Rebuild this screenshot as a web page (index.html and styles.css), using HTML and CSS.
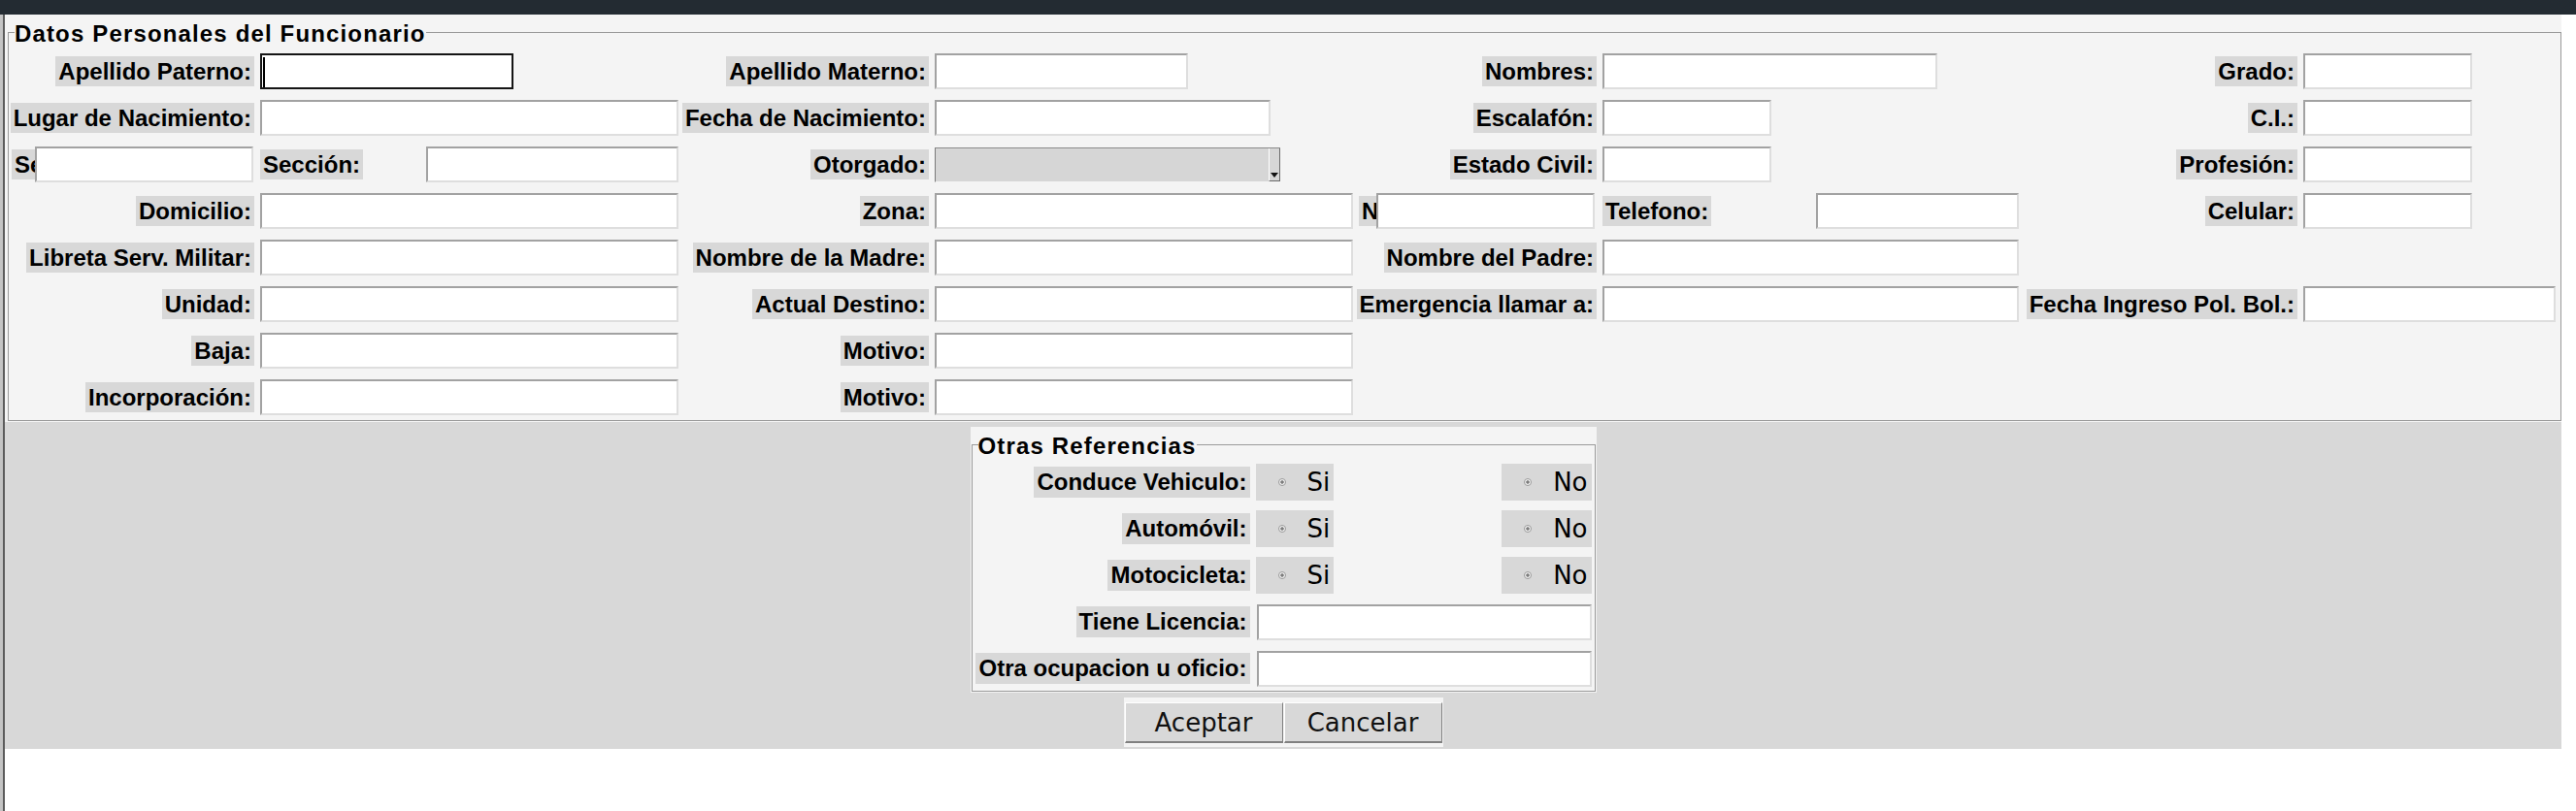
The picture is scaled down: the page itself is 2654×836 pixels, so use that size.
FILE: index.html
```html
<!DOCTYPE html>
<html lang="es">
<head>
<meta charset="utf-8">
<title>Datos Personales del Funcionario</title>
<link rel="stylesheet" href="styles.css">
</head>
<body>
<div class="topbar"></div>
<div class="app">
  <div class="edge"></div>
  <div class="window">
    <section class="top-panel">
      <fieldset class="group group-main">
        <legend class="group-title">Datos Personales del Funcionario</legend>
        <div class="form-grid">
          <span class="lbl col-a">Apellido Paterno:</span>
          <input class="field focused w261" type="text">
          <span class="lbl">Apellido Materno:</span>
          <input class="field w261" type="text">
          <span class="lbl">Nombres:</span>
          <input class="field w345" type="text">
          <span class="lbl">Grado:</span>
          <input class="field w174" type="text">

          <span class="lbl col-a">Lugar de Nacimiento:</span>
          <input class="field w431" type="text">
          <span class="lbl">Fecha de Nacimiento:</span>
          <input class="field w346" type="text">
          <span class="lbl">Escalafón:</span>
          <input class="field w174" type="text">
          <span class="lbl">C.I.:</span>
          <input class="field w174" type="text">

          <div class="cell-split col-a"><span class="lbl clip w24">Se</span><input class="field w225" type="text"></div>
          <div class="cell-spread"><span class="lbl">Sección:</span><input class="field w260" type="text"></div>
          <span class="lbl">Otorgado:</span>
          <div class="select w356"><span class="select-arrow"></span></div>
          <span class="lbl">Estado Civil:</span>
          <input class="field w174" type="text">
          <span class="lbl">Profesión:</span>
          <input class="field w174" type="text">

          <span class="lbl col-a">Domicilio:</span>
          <input class="field w431" type="text">
          <span class="lbl">Zona:</span>
          <input class="field w431" type="text">
          <div class="cell-split"><span class="lbl clip w18">N</span><input class="field w225" type="text"></div>
          <div class="cell-spread"><span class="lbl">Telefono:</span><input class="field w209" type="text"></div>
          <span class="lbl">Celular:</span>
          <input class="field w174" type="text">

          <span class="lbl col-a">Libreta Serv. Militar:</span>
          <input class="field w431" type="text">
          <span class="lbl">Nombre de la Madre:</span>
          <input class="field w431" type="text">
          <span class="lbl">Nombre del Padre:</span>
          <input class="field w429" type="text">

          <span class="lbl col-a">Unidad:</span>
          <input class="field w431" type="text">
          <span class="lbl">Actual Destino:</span>
          <input class="field w431" type="text">
          <span class="lbl">Emergencia llamar a:</span>
          <input class="field w429" type="text">
          <span class="lbl">Fecha Ingreso Pol. Bol.:</span>
          <input class="field w260" type="text">

          <span class="lbl col-a">Baja:</span>
          <input class="field w431" type="text">
          <span class="lbl">Motivo:</span>
          <input class="field w431" type="text">

          <span class="lbl col-a">Incorporación:</span>
          <input class="field w431" type="text">
          <span class="lbl">Motivo:</span>
          <input class="field w431" type="text">
        </div>
      </fieldset>
    </section>

    <section class="bottom-panel">
      <div class="refs-panel">
        <fieldset class="group group-refs">
          <legend class="group-title">Otras Referencias</legend>
          <div class="refs-grid">
            <span class="lbl">Conduce Vehiculo:</span>
            <div class="radios">
              <span class="radio"><span class="dot"></span>Si</span>
              <span class="radio"><span class="dot"></span>No</span>
            </div>

            <span class="lbl">Automóvil:</span>
            <div class="radios">
              <span class="radio"><span class="dot"></span>Si</span>
              <span class="radio"><span class="dot"></span>No</span>
            </div>

            <span class="lbl">Motocicleta:</span>
            <div class="radios">
              <span class="radio"><span class="dot"></span>Si</span>
              <span class="radio"><span class="dot"></span>No</span>
            </div>

            <span class="lbl">Tiene Licencia:</span>
            <input class="field w345 shift1" type="text">

            <span class="lbl">Otra ocupacion u oficio:</span>
            <input class="field w345 shift1" type="text">
          </div>
        </fieldset>
      </div>
      <div class="buttons">
        <button class="btn" type="button">Aceptar</button>
        <button class="btn" type="button">Cancelar</button>
      </div>
    </section>
  </div>
</div>
</body>
</html>
```

FILE: styles.css
```css
html, body {
  margin: 0;
  padding: 0;
  background: #ffffff;
}

body {
  font-family: "Liberation Sans", Arial, sans-serif;
  color: #000;
}

.topbar {
  height: 15px;
  background: #232b32;
}

.app {
  display: flex;
  height: 821px;
  background: #ffffff;
}

.edge {
  flex: none;
  width: 3px;
  background: #c4c4c4;
  border-right: 2px solid #5c5c5c;
}

.window {
  flex: none;
  width: 2634px;
}

/* ---------- top section ---------- */
.top-panel {
  background: #f4f4f4;
  padding: 3px 0 1px 3px;
}

.group {
  margin: 0;
  border: 1px solid #9a9a9a;
  min-width: 0;
}

.group-title {
  margin-left: 3px;
  padding: 3px 0 0 0;
  font-family: "Liberation Sans", Arial, sans-serif;
  font-weight: bold;
  font-size: 24px;
  line-height: 28px;
  letter-spacing: 1.15px;
  color: #000;
}

.group-main {
  padding: 6px 4px 5px 3px;
}

.form-grid {
  display: grid;
  grid-template-columns: 250px 431px 252px 431px 245px 429px 281px 261px;
  grid-auto-rows: 37px;
  column-gap: 6px;
  row-gap: 11px;
}

.col-a {
  grid-column: 1;
}

.lbl {
  justify-self: end;
  align-self: center;
  box-sizing: border-box;
  height: 31px;
  line-height: 31px;
  padding: 0 3px;
  background: #d8d8d8;
  font-weight: bold;
  font-size: 24px;
  white-space: nowrap;
  color: #000;
}

.lbl.clip {
  overflow: hidden;
  padding-right: 0;
}

.field {
  justify-self: start;
  align-self: center;
  box-sizing: border-box;
  height: 37px;
  margin: 0;
  padding: 0;
  border-style: solid;
  border-width: 2px;
  border-color: #a2a2a2 #dedede #dedede #a2a2a2;
  background: #ffffff;
  outline: none;
  font: 24px "Liberation Sans", Arial, sans-serif;
}

.field.focused {
  border-color: #151515;
  background: linear-gradient(#000, #000) 1px 2px / 2px 31px no-repeat, #ffffff;
}

.cell-split {
  display: flex;
  align-items: center;
  justify-self: start;
}

.cell-spread {
  display: flex;
  align-items: center;
  justify-content: space-between;
}

.cell-split .lbl,
.cell-spread .lbl {
  flex: none;
}

.select {
  justify-self: start;
  align-self: center;
  box-sizing: border-box;
  height: 36px;
  display: flex;
  justify-content: flex-end;
  background: #d6d6d6;
  border-style: solid;
  border-width: 1px 0 1px 1px;
  border-color: #8a8a8a #f4f4f4 #f4f4f4 #7a7a7a;
}

.select-arrow {
  box-sizing: border-box;
  width: 12px;
  display: flex;
  align-items: flex-end;
  justify-content: center;
  padding-bottom: 3px;
  border-left: 1px solid #ffffff;
  border-right: 1px solid #6a6a6a;
  border-bottom: 1px solid #6a6a6a;
  background: #d6d6d6;
}

.select-arrow::before {
  content: "";
  width: 0;
  height: 0;
  border-left: 4px solid transparent;
  border-right: 4px solid transparent;
  border-top: 5px solid #111;
}

.w18 { width: 18px; }
.w24 { width: 24px; }
.w174 { width: 174px; }
.w209 { width: 209px; }
.w225 { width: 225px; }
.w260 { width: 260px; }
.w261 { width: 261px; }
.w345 { width: 345px; }
.w346 { width: 346px; }
.w356 { width: 356px; }
.w429 { width: 429px; }
.w431 { width: 431px; }

/* ---------- bottom section ---------- */
.bottom-panel {
  background: #d8d8d8;
  padding: 5px 0 2px 0;
  display: flex;
  flex-direction: column;
  align-items: center;
  gap: 5px;
}

.refs-panel {
  width: 645px;
  box-sizing: border-box;
  background: #f4f4f4;
  padding: 3px 1px 1px 1px;
}

.group-refs {
  padding: 4px 3px 4px 3px;
}

.refs-grid {
  display: grid;
  grid-template-columns: 283px 346px;
  grid-auto-rows: 38px;
  column-gap: 6px;
  row-gap: 10px;
}

.refs-grid .lbl {
  height: 32px;
  line-height: 32px;
}

.shift1 {
  margin-left: 1px;
}

.radios {
  display: flex;
  justify-content: space-between;
  align-items: stretch;
}

.radio {
  display: flex;
  align-items: center;
  box-sizing: border-box;
  padding: 0 4px 0 21px;
  background: #d8d8d8;
  font-family: "DejaVu Sans", Verdana, sans-serif;
  font-size: 26px;
  color: #000;
}

.dot {
  flex: none;
  width: 12px;
  height: 12px;
  margin-right: 20px;
  display: flex;
  align-items: center;
  justify-content: center;
}

.dot::before {
  content: "";
  box-sizing: border-box;
  width: 8px;
  height: 8px;
  border-radius: 50%;
  border: 1px solid #9c9c9c;
  background: radial-gradient(circle, #7c7c7c 0 1.4px, #f2f2f2 2px);
}

.buttons {
  display: flex;
  gap: 1px;
  background: #f4f4f4;
  padding: 5px 1px 4px 1px;
}

.btn {
  box-sizing: border-box;
  width: 163px;
  height: 42px;
  margin: 0;
  padding: 0;
  background: #d8d8d8;
  border-style: solid;
  border-width: 1px 1px 2px 1px;
  border-color: #ffffff #808080 #808080 #ffffff;
  font-family: "DejaVu Sans", Verdana, sans-serif;
  font-size: 26px;
  color: #111;
}
```
